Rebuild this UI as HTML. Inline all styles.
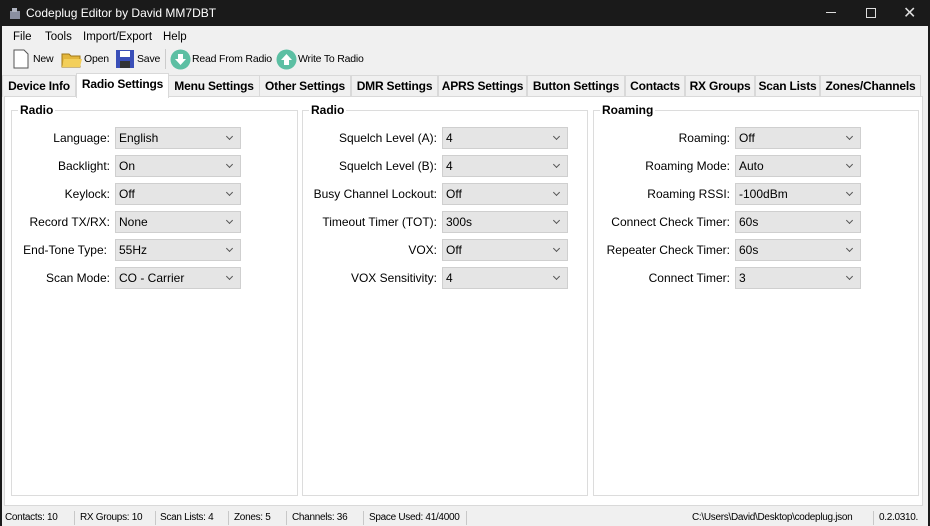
<!DOCTYPE html>
<html><head><meta charset="utf-8"><style>
*{margin:0;padding:0;box-sizing:border-box}
body{width:930px;height:526px;background:#1a1a1a;font-family:"Liberation Sans",sans-serif;font-size:12px;color:#000;position:relative;overflow:hidden}
.abs{position:absolute}
#title{left:0;top:0;width:930px;height:26px;background:#1a1a1a;color:#fff;font-size:12px}
#win{left:2px;top:26px;width:926px;height:500px;background:#f0f0f0}
.menu span{position:absolute;top:5px;font-size:11.5px}
.tb{position:absolute;top:27px;font-size:10.5px;letter-spacing:-0.2px}
.tab{position:absolute;top:49px;height:22px;border:1px solid #d9d9d9;border-bottom:none;background:#f0f0f0;font-weight:bold;font-size:12px;text-align:center;line-height:20px;white-space:nowrap;letter-spacing:-0.2px}
.tab.sel{top:47px;height:25px;background:#fff;z-index:2}
#content{left:2px;top:70px;width:919px;height:410px;background:#fff;border:1px solid #d9d9d9}
.grp{position:absolute;top:13px;height:386px;border:1px solid #dcdcdc}
.grp b{position:absolute;top:-8px;left:6px;background:#fff;padding:0 2px;font-size:12px}
.lbl{position:absolute;text-align:right;font-size:12px;height:22px;line-height:22px}
.cb{position:absolute;width:126px;height:22px;background:#e5e5e5;border:1px solid #cfcfcf;line-height:20px;padding-left:3px;font-size:12px}
.cb:after{content:"";position:absolute;right:8px;top:6px;width:4px;height:4px;border-right:1px solid #555;border-bottom:1px solid #555;transform:rotate(45deg)}
#status{left:0;top:484px;width:926px;height:16px;font-size:10px;line-height:16px;letter-spacing:-0.3px}
#status span{position:absolute;top:0}
#status i{position:absolute;top:1px;width:1px;height:14px;background:#c8c8c8}
</style></head><body>
<div id="title" class="abs">
<svg class="abs" style="left:8px;top:6px" width="14" height="14"><rect x="2" y="5" width="10" height="8" fill="#8a8fa0"/><rect x="4" y="2" width="5" height="4" fill="#b0b4c0"/></svg>
<span class="abs" style="left:26px;top:6px">Codeplug Editor by David MM7DBT</span>
<div class="abs" style="left:826px;top:12px;width:10px;height:1px;background:#ddd"></div>
<div class="abs" style="left:866px;top:8px;width:10px;height:10px;border:1px solid #ddd"></div>
<span class="abs" style="left:903px;top:3px;font-size:16px;color:#ddd">✕</span>
</div>
<div id="win" class="abs">
<div class="menu"><span style="left:11px">File</span><span style="left:43px">Tools</span><span style="left:81px">Import/Export</span><span style="left:161px">Help</span></div>
<svg class="abs" style="left:10px;top:23px" width="18" height="20"><path d="M2 1h10l4 4v14H2z" fill="#fff" stroke="#555"/></svg>
<span class="tb" style="left:31px">New</span>
<svg class="abs" style="left:59px;top:24px" width="22" height="18"><path d="M1 4h7l2 2h9v11H1z" fill="#e3b63c" stroke="#a07818"/><path d="M3 9h18l-2 8H1z" fill="#f3cf5a"/></svg>
<span class="tb" style="left:82px">Open</span>
<svg class="abs" style="left:114px;top:24px" width="18" height="18"><rect x="0" y="0" width="18" height="18" fill="#3a4fb8"/><rect x="4" y="1" width="10" height="6" fill="#fff"/><rect x="4" y="11" width="10" height="7" fill="#333"/></svg>
<span class="tb" style="left:135px">Save</span>
<div class="abs" style="left:163px;top:23px;width:1px;height:20px;background:#ccc"></div>
<svg class="abs" style="left:168px;top:23px" width="21" height="21"><circle cx="10.5" cy="10.5" r="10" fill="#5cbfa3"/><path d="M8 5h5v5h3l-5.5 6L5 10h3z" fill="#fff"/></svg>
<span class="tb" style="left:190px">Read From Radio</span>
<svg class="abs" style="left:274px;top:23px" width="21" height="21"><circle cx="10.5" cy="10.5" r="10" fill="#5cbfa3"/><path d="M8 16h5v-5h3l-5.5-6L5 11h3z" fill="#fff"/></svg>
<span class="tb" style="left:296px">Write To Radio</span>

<div class="tab" style="left:0;width:74px">Device Info</div>
<div class="tab sel" style="left:74px;width:93px">Radio Settings</div>
<div class="tab" style="left:166px;width:92px">Menu Settings</div>
<div class="tab" style="left:257px;width:92px">Other Settings</div>
<div class="tab" style="left:349px;width:87px">DMR Settings</div>
<div class="tab" style="left:436px;width:89px">APRS Settings</div>
<div class="tab" style="left:525px;width:98px">Button Settings</div>
<div class="tab" style="left:623px;width:60px">Contacts</div>
<div class="tab" style="left:683px;width:70px">RX Groups</div>
<div class="tab" style="left:753px;width:65px">Scan Lists</div>
<div class="tab" style="left:818px;width:101px">Zones/Channels</div>

<div id="content" class="abs">
<div class="grp" style="left:6px;width:287px"><b>Radio</b></div>
<div class="grp" style="left:297px;width:286px"><b>Radio</b></div>
<div class="grp" style="left:588px;width:326px"><b>Roaming</b></div>

<div class="lbl" style="left:0;width:105px;top:30px">Language:</div><div class="cb" style="left:110px;top:30px">English</div>
<div class="lbl" style="left:0;width:105px;top:58px">Backlight:</div><div class="cb" style="left:110px;top:58px">On</div>
<div class="lbl" style="left:0;width:105px;top:86px">Keylock:</div><div class="cb" style="left:110px;top:86px">Off</div>
<div class="lbl" style="left:0;width:105px;top:114px">Record TX/RX:</div><div class="cb" style="left:110px;top:114px">None</div>
<div class="lbl" style="left:0;width:102px;top:142px">End-Tone Type:</div><div class="cb" style="left:110px;top:142px">55Hz</div>
<div class="lbl" style="left:0;width:105px;top:170px">Scan Mode:</div><div class="cb" style="left:110px;top:170px">CO - Carrier</div>

<div class="lbl" style="left:298px;width:134px;top:30px">Squelch Level (A):</div><div class="cb" style="left:437px;top:30px">4</div>
<div class="lbl" style="left:298px;width:134px;top:58px">Squelch Level (B):</div><div class="cb" style="left:437px;top:58px">4</div>
<div class="lbl" style="left:298px;width:134px;top:86px">Busy Channel Lockout:</div><div class="cb" style="left:437px;top:86px">Off</div>
<div class="lbl" style="left:298px;width:134px;top:114px">Timeout Timer (TOT):</div><div class="cb" style="left:437px;top:114px">300s</div>
<div class="lbl" style="left:298px;width:134px;top:142px">VOX:</div><div class="cb" style="left:437px;top:142px">Off</div>
<div class="lbl" style="left:298px;width:134px;top:170px">VOX Sensitivity:</div><div class="cb" style="left:437px;top:170px">4</div>

<div class="lbl" style="left:589px;width:136px;top:30px">Roaming:</div><div class="cb" style="left:730px;top:30px">Off</div>
<div class="lbl" style="left:589px;width:136px;top:58px">Roaming Mode:</div><div class="cb" style="left:730px;top:58px">Auto</div>
<div class="lbl" style="left:589px;width:136px;top:86px">Roaming RSSI:</div><div class="cb" style="left:730px;top:86px">-100dBm</div>
<div class="lbl" style="left:589px;width:136px;top:114px">Connect Check Timer:</div><div class="cb" style="left:730px;top:114px">60s</div>
<div class="lbl" style="left:589px;width:136px;top:142px">Repeater Check Timer:</div><div class="cb" style="left:730px;top:142px">60s</div>
<div class="lbl" style="left:589px;width:136px;top:170px">Connect Timer:</div><div class="cb" style="left:730px;top:170px">3</div>
</div>

<div id="status" class="abs">
<span style="left:3px">Contacts: 10</span><i style="left:72px"></i>
<span style="left:78px">RX Groups: 10</span><i style="left:153px"></i>
<span style="left:158px">Scan Lists: 4</span><i style="left:226px"></i>
<span style="left:232px">Zones: 5</span><i style="left:284px"></i>
<span style="left:290px">Channels: 36</span><i style="left:361px"></i>
<span style="left:367px">Space Used: 41/4000</span><i style="left:464px"></i>
<span style="left:690px">C:\Users\David\Desktop\codeplug.json</span><i style="left:871px"></i>
<span style="left:877px">0.2.0310.</span>
</div>
</div>
</body></html>
